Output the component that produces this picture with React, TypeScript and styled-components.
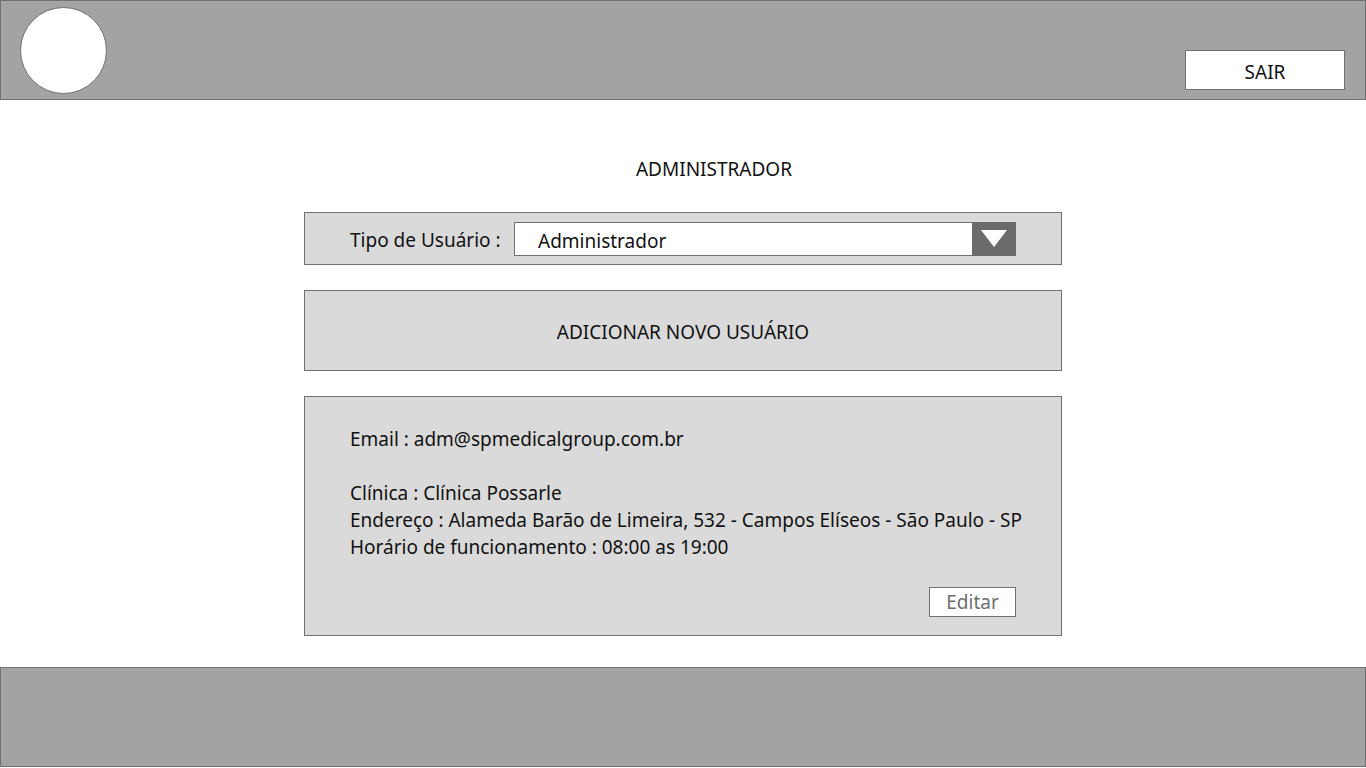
import React from "react";
import styled, { createGlobalStyle } from "styled-components";

const Global = createGlobalStyle`
  html, body { margin: 0; padding: 0; background: #ffffff; }
  body { font-family: "Noto Sans", "Open Sans", sans-serif; color: #111; }
  * { box-sizing: border-box; }
`;

const Page = styled.div`
  width: 1366px;
  height: 767px;
  display: flex;
  flex-direction: column;
`;

const Bar = styled.div`
  height: 100px;
  flex: none;
  background: #a3a3a3;
  border: 1px solid #707070;
`;

const Header = styled(Bar)`
  display: flex;
  align-items: flex-start;
  justify-content: space-between;
  padding: 6px 20px 0 19px;
`;

const Avatar = styled.div`
  width: 87px;
  height: 87px;
  border-radius: 50%;
  background: #fff;
  border: 1px solid #707070;
`;

const ExitButton = styled.button`
  margin-top: 43px;
  width: 160px;
  height: 40px;
  background: #fff;
  border: 1px solid #707070;
  font-family: inherit;
  font-size: 19px;
  color: #111;
  padding: 3px 0 0;
  cursor: pointer;
`;

const Main = styled.main`
  flex: 1;
  display: flex;
  flex-direction: column;
  align-items: center;
  padding-top: 55px;
`;

const Title = styled.h1`
  margin: 0 0 29px 62px;
  font-size: 19px;
  font-weight: 400;
  line-height: 28px;
`;

const Panel = styled.section<{ $h: number }>`
  width: 758px;
  height: ${(p) => p.$h}px;
  background: #dadada;
  border: 1px solid #707070;
  margin-bottom: 25px;
`;

const SelectRow = styled(Panel)`
  display: flex;
  align-items: center;
  padding: 0 45px 0 45px;
`;

const Label = styled.span`
  font-size: 19px;
  width: 164px;
  padding-top: 3px;
  white-space: nowrap;
`;

const Select = styled.div`
  flex: 1;
  height: 34px;
  display: flex;
  background: #fff;
  border: 1px solid #707070;
`;

const SelectValue = styled.span`
  flex: 1;
  font-size: 19px;
  line-height: 32px;
  padding: 2px 0 0 23px;
`;

const Arrow = styled.div`
  width: 44px;
  margin: -1px -1px -1px 0;
  background: #6b6b6b;
  display: flex;
  align-items: center;
  justify-content: center;
`;

const AddButton = styled(Panel)`
  display: flex;
  align-items: center;
  justify-content: center;
  font-size: 19px;
  padding-top: 2px;
`;

const Info = styled(Panel)`
  display: flex;
  flex-direction: column;
  padding: 29px 45px 0 45px;
  font-size: 19px;
  line-height: 27px;
`;

const Line = styled.div<{ $gap?: boolean }>`
  margin-bottom: ${(p) => (p.$gap ? 27 : 0)}px;
  white-space: nowrap;
`;

const EditButton = styled.button`
  align-self: flex-end;
  margin-top: 26px;
  width: 87px;
  height: 30px;
  background: #fff;
  border: 1px solid #707070;
  color: #6e6e6e;
  font-family: inherit;
  font-size: 19px;
  padding: 0;
  line-height: 26px;
  cursor: pointer;
`;

const Footer = styled(Bar)``;

export default function App() {
  return (
    <>
      <Global />
      <Page>
        <Header>
          <Avatar />
          <ExitButton>SAIR</ExitButton>
        </Header>
        <Main>
          <Title>ADMINISTRADOR</Title>
          <SelectRow $h={53}>
            <Label>Tipo de Usuário :</Label>
            <Select>
              <SelectValue>Administrador</SelectValue>
              <Arrow>
                <svg width="26" height="17" viewBox="0 0 26 17">
                  <polygon points="0,0 26,0 13,17" fill="#fff" />
                </svg>
              </Arrow>
            </Select>
          </SelectRow>
          <AddButton $h={81}>ADICIONAR NOVO USUÁRIO</AddButton>
          <Info $h={240}>
            <Line $gap>Email : adm@spmedicalgroup.com.br</Line>
            <Line>Clínica : Clínica Possarle</Line>
            <Line>Endereço : Alameda Barão de Limeira, 532 - Campos Elíseos - São Paulo - SP</Line>
            <Line>Horário de funcionamento : 08:00 as 19:00</Line>
            <EditButton>Editar</EditButton>
          </Info>
        </Main>
        <Footer />
      </Page>
    </>
  );
}
